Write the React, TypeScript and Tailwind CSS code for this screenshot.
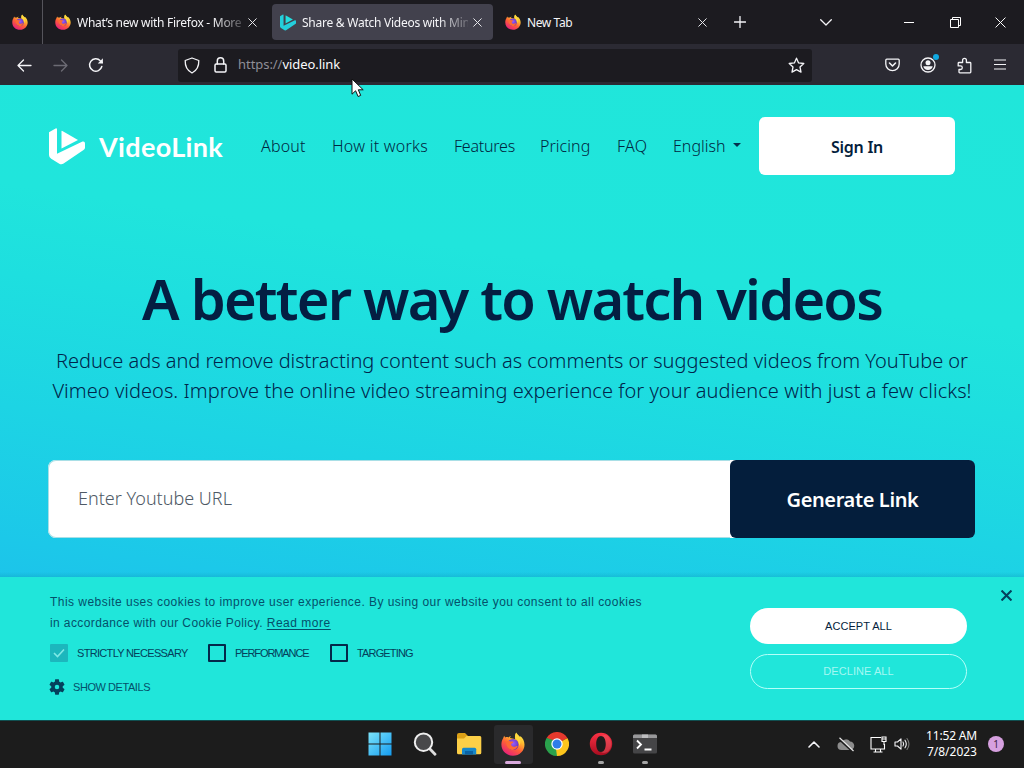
import React from "react";

const UI = "font-['Noto_Sans','Open_Sans',sans-serif]";

function FirefoxIcon({ size = 16, id }: { size?: number; id: string }) {
  return (
    <svg width={size} height={size} viewBox="0 0 24 24" className="shrink-0">
      <defs>
        <linearGradient id={id + "a"} x1="0.8" y1="0.05" x2="0.25" y2="0.95">
          <stop offset="0" stopColor="#fff04a" />
          <stop offset="0.3" stopColor="#ffb52e" />
          <stop offset="0.6" stopColor="#ff5f36" />
          <stop offset="1" stopColor="#e8217a" />
        </linearGradient>
        <radialGradient id={id + "b"} cx="0.5" cy="0.4" r="0.6">
          <stop offset="0" stopColor="#9a5cff" />
          <stop offset="1" stopColor="#5a35b8" />
        </radialGradient>
      </defs>
      <path
        d="M15.2 0.6c1 1.6 2.6 2.8 3.7 4.2.3.4.5-.1.4-.8 2.6 2 4.2 5.400 4.200 8.700C23.500 18.800 18.400 23.700 12 23.700S.4 18.900.4 12.600c0-2.600.6-4.800 1.900-6.600.1-.8.500-1.700 1.100-2.300.1.700.4 1.200.8 1.700 1.100-.4 2.200-.4 3.300 0 .7-.7 1.500-1.200 2.500-1.500-.7.700-1 1.500-.9 2.200 2 .2 3.200.5 4.900 1.200C13.800 5.100 14 2.600 15.200.6z"
        fill={`url(#${id}a)`}
      />
      <circle cx="12" cy="12.500" r="5.600" fill={`url(#${id}b)`} />
      <path
        d="M5.300 9.800c1.200-1 3-.9 4.200-.3 1 .1 2.100 0 2.900.2-.1 1.100-1.400 1.500-2.200 2-.3 1.600.8 3.100 2.700 3.100 1.600 0 2.300-1 3.800-.7-.9 2.700-3.200 4.200-5.900 3.800-3.600-.5-5.900-4-5.500-8.100z"
        fill="#ff6a33"
      />
      <path d="M15 1c1 1.600 2.800 3.200 3.700 5 1.400 3 .8 6-.7 8 .3-3.300-1-5.800-3-7.200-1.300-1.200-1.200-3.600 0-5.800z" fill="#ffd83c" />
    </svg>
  );
}

function Cross({ s = 9, color = "#e8e8ec", w = 1.1 }: { s?: number; color?: string; w?: number }) {
  return (
    <svg width={s} height={s} viewBox="0 0 10 10" fill="none" stroke={color} strokeWidth={w}>
      <path d="M.5 .5l9 9M9.500 .5l-9 9" />
    </svg>
  );
}

function LinkMark({ w, h, top, bottom }: { w: number; h: number; top: string; bottom: string }) {
  return (
    <svg width={w} height={h} viewBox="0 0 36 37" className="shrink-0">
      <path
        d="M0 4.200L6.600 .4Q8 0 8 1.600V25.700L33.500 13.600Q36 13 36 15.500V19.500Q36 21.200 34.500 22.100L14.600 35.600Q12.500 37 10.300 35.800L2.200 30.800Q0 29.500 0 27Z"
        fill={bottom}
      />
      <path d="M12.500 3.400Q12.500 2.600 13.400 3L29 12L12.500 20.600Z" fill={top} />
    </svg>
  );
}

function Glyph({ w, children }: { w: string; children: React.ReactNode }) {
  return <span className={`flex shrink-0 items-center justify-center ${w}`}>{children}</span>;
}

const stroke = { fill: "none", stroke: "#f4f4f7", strokeWidth: 1.3, strokeLinecap: "round", strokeLinejoin: "round" } as const;

function TabBar() {
  return (
    <div className={`flex h-11 items-center bg-[#1c1b20] text-[12px] text-[#f5f5f8] ${UI}`}>
      <div className="flex h-11 w-[43px] shrink-0 items-center border-r border-[#55545b] pl-3">
        <FirefoxIcon size={16} id="f1" />
      </div>
      <div className="flex w-[229px] shrink-0 items-center pl-3">
        <FirefoxIcon size={16} id="f2" />
        <span className="ml-[6px] w-[166px] overflow-hidden whitespace-nowrap pt-[2px] tracking-[-0.27px] [mask-image:linear-gradient(90deg,#000_82%,#0003)]">
          What’s new with Firefox - More
        </span>
        <Glyph w="w-[18px]"><Cross /></Glyph>
      </div>
      <div className="flex h-9 w-[221px] shrink-0 items-center rounded-[4px] bg-[#42414d] pl-2">
        <LinkMark w={16} h={17} top="#24dfe0" bottom="#24cfdc" />
        <span className="ml-[6px] w-[166px] overflow-hidden whitespace-nowrap pt-[2px] tracking-[-0.25px] [mask-image:linear-gradient(90deg,#000_82%,#0003)]">
          Share &amp; Watch Videos with Min
        </span>
        <Glyph w="w-[18px]"><Cross /></Glyph>
      </div>
      <div className="flex w-[218px] shrink-0 items-center pl-3">
        <FirefoxIcon size={16} id="f3" />
        <span className="ml-[6px] w-[166px] pt-[2px] tracking-[-0.4px]">New Tab</span>
        <Glyph w="w-[18px]"><Cross /></Glyph>
      </div>
      <Glyph w="w-[57px]">
        <svg width="12" height="12" viewBox="0 0 12 12" {...stroke}><path d="M6 .5v11M.5 6h11" /></svg>
      </Glyph>
      <Glyph w="w-[116px]">
        <svg width="12" height="7" viewBox="0 0 12 7" {...stroke}><path d="M.7 .7L6 6L11.300 .7" /></svg>
      </Glyph>
      <Glyph w="w-[50px]"><span className="h-px w-[10px] bg-white" /></Glyph>
      <Glyph w="w-[42px]">
        <svg width="11" height="11" viewBox="0 0 11 11" fill="none" stroke="#fff"><path d="M.5 2.500h8v8h-8zM2.500 2.500v-2h8v8h-2" /></svg>
      </Glyph>
      <Glyph w="w-[48px]"><Cross s={11} color="#fff" w={0.9} /></Glyph>
    </div>
  );
}

function Toolbar() {
  return (
    <div className="flex h-[41px] items-center bg-[#2b2a33] pl-[6px] pt-px">
      <Glyph w="w-9">
        <svg width="15" height="13" viewBox="0 0 15 13" {...stroke}><path d="M14 6.500H1M6.500 1L1 6.500L6.500 12" /></svg>
      </Glyph>
      <Glyph w="w-9">
        <svg width="15" height="13" viewBox="0 0 15 13" {...stroke} stroke="#6c6b74"><path d="M1 6.500h13M8.500 1L14 6.500L8.500 12" /></svg>
      </Glyph>
      <Glyph w="w-9">
        <svg width="16" height="16" viewBox="0 0 16 16" {...stroke} strokeWidth="1.500">
          <path d="M13.800 9.500A6.200 6.200 0 1 1 12.300 3.700L14.200 5.500" />
          <path d="M14.900 1.300v5.100H9.800z" fill="#f4f4f7" stroke="none" />
        </svg>
      </Glyph>
      <div className="ml-16 flex h-[33px] w-[634px] items-center rounded-[3px] bg-[#1c1b20]">
        <Glyph w="w-7">
          <svg width="16" height="17" viewBox="0 0 16 17" {...stroke}>
            <path d="M8 1L14.800 3.500C15 9 13 13.500 8 16C3 13.500 1 9 1.200 3.500Z" />
          </svg>
        </Glyph>
        <Glyph w="w-7">
          <svg width="13" height="16" viewBox="0 0 13 16" {...stroke} strokeWidth="1.500">
            <rect x="1" y="7" width="11" height="8" rx="1.200" /><path d="M3.300 7V4a3.200 3.200 0 0 1 6.400 0v3" />
          </svg>
        </Glyph>
        <span className={`ml-1 flex-1 text-[13px] tracking-[-0.05px] text-[#fbfbfe] ${UI}`}>
          <span className="text-[#8f8e97]">https://</span>video.link
        </span>
        <Glyph w="w-8">
          <svg width="17" height="17" viewBox="0 0 17 17" {...stroke}>
            <path d="M8.500 1.200l2.100 4.700 5.200.6-3.800 3.500 1 5.100-4.500-2.500L4 15.100l1-5.100L1.200 6.500l5.200-.6z" />
          </svg>
        </Glyph>
      </div>
      <div className="ml-[62px] flex">
        <Glyph w="w-9">
          <svg width="15" height="14" viewBox="0 0 15 14" {...stroke}>
            <path d="M1.800 1.200h11.400q1 0 1 1V6a6.700 6.700 0 0 1-13.400 0V2.200q0-1 1-1z" /><path d="M4.500 5L7.500 8L10.500 5" strokeWidth="1.600" />
          </svg>
        </Glyph>
        <span className="relative flex w-9 items-center justify-center">
          <svg width="16" height="16" viewBox="0 0 16 16" {...stroke}>
            <circle cx="8" cy="8" r="7" /><circle cx="8" cy="5.800" r="2.500" fill="#f4f4f7" stroke="none" />
            <path d="M3.300 9.200h9.400Q11.800 13 8 13T3.300 9.200z" fill="#f4f4f7" stroke="none" />
          </svg>
          <span className="absolute left-[23px] -top-[3px] h-[6px] w-[6px] rounded-full bg-[#10a8e0]" />
        </span>
        <Glyph w="w-9">
          <svg width="15" height="17" viewBox="0 0 15 17" {...stroke}>
            <path d="M2 5.500h3.600V3.200a1.900 1.900 0 0 1 3.800 0v2.300H13q.8 0 .8.800V15q0 .8-.8.800H2.800Q2 15.800 2 15v-2.500h1.500a1.800 1.800 0 0 0 0-3.600H1.200V6.300q0-.8.800-.8z" />
          </svg>
        </Glyph>
        <Glyph w="w-9">
          <svg width="12" height="11" viewBox="0 0 12 11" fill="none" stroke="#f4f4f7" strokeWidth="1.200" className="-mt-[2px]"><path d="M0 1h12M0 5.500h12M0 10h12" /></svg>
        </Glyph>
      </div>
    </div>
  );
}

function Header() {
  return (
    <header className="flex h-[58px] items-center text-[16px] font-light text-[#00263f]">
      <LinkMark w={36} h={37} top="#fff" bottom="#fff" />
      <span className="ml-[14px] w-[162px] font-['Lato',sans-serif] text-[27px] font-bold leading-none tracking-[0.34px] text-white">
        VideoLink
      </span>
      <nav className="flex w-[498px] whitespace-nowrap">
        <a className="w-[71px] tracking-[0.2px]">About</a>
        <a className="w-[122px] tracking-[0.26px]">How it works</a>
        <a className="w-[86px] tracking-[-0.23px]">Features</a>
        <a className="w-[77px] tracking-[0.05px]">Pricing</a>
        <a className="w-[56px] tracking-[0.3px]">FAQ</a>
        <a className="flex items-center">
          English
          <svg width="8" height="4" viewBox="0 0 8 4" className="-mt-[2px] ml-2"><path d="M0 0h8L4 4z" fill="#04304d" /></svg>
        </a>
      </nav>
      <button className="h-[58px] w-[196px] rounded-[6px] bg-white pt-[2px] text-[16px] font-semibold tracking-[-0.26px] text-[#041e3c]">
        Sign In
      </button>
    </header>
  );
}

function Hero() {
  return (
    <main className={`flex h-[492px] flex-col bg-[linear-gradient(188deg,#20e6da_0%,#20e5dc_38%,#1edfdf_52%,#1dd4e4_73%,#1cc8e9_94%,#1cc4ea_100%)] pl-[49px] pt-8 ${UI}`}>
      <Header />
      <h1 className="mt-[93px] w-[926px] text-center text-[56px] font-semibold leading-[60px] tracking-[-1.8px] text-[#041e42]">
        A better way to watch videos
      </h1>
      <p className="mt-[18px] w-[926px] whitespace-nowrap text-center text-[20px] font-light leading-[30px] text-[#00244a]">
        <span className="tracking-[-0.026px]">Reduce ads and remove distracting content such as comments or suggested videos from YouTube or</span>
        <br />
        <span className="tracking-[0.04px]">Vimeo videos. Improve the online video streaming experience for your audience with just a few clicks!</span>
      </p>
      <form className="-ml-px mt-[54px] flex h-[78px] w-[927px] rounded-[8px] bg-white">
        <span className="flex flex-1 items-center rounded-l-[8px] border border-r-0 border-[#a9dfe6] pb-[2px] pl-[29px] text-[18px] font-light text-[#4f5a66]">
          Enter Youtube URL
        </span>
        <span className="flex w-[245px] items-center justify-center rounded-[6px] bg-[#041e3c] pt-[2px] text-[20px] font-semibold tracking-[-0.37px] text-white">
          Generate Link
        </span>
      </form>
      <div className="-ml-[49px] mt-auto h-[5px] bg-gradient-to-b from-transparent to-[#0893ad44]" />
    </main>
  );
}

function Check({ label, on, w, ls }: { label: string; on?: boolean; w: string; ls: string }) {
  return (
    <span className={`flex items-center ${w}`}>
      {on ? (
        <svg width="18" height="18" viewBox="0 0 18 18"><rect width="18" height="18" rx="1" fill="#1cb7bd" /><path d="M4 9l3.500 3.500L14 5.500" fill="none" stroke="#7fe9e6" strokeWidth="1.600" /></svg>
      ) : (
        <span className="h-[18px] w-[18px] rounded-[1px] border-2 border-[#04284a]" />
      )}
      <span className={`ml-[9px] ${ls}`}>{label}</span>
    </span>
  );
}

function CookieBar() {
  return (
    <section className="flex h-[143px] bg-[#20e6da] pl-[50px] font-['Liberation_Sans',Arial,sans-serif] text-[11px] text-[#04506a]">
      <div className="w-[700px] pt-[15px]">
        <p className="whitespace-nowrap text-[12px] leading-[21px]">
          <span className="tracking-[0.46px]">This website uses cookies to improve user experience. By using our website you consent to all cookies</span>
          <br />
          <span className="tracking-[0.39px]">in accordance with our Cookie Policy. <span className="tracking-[0.52px] underline underline-offset-2">Read more</span></span>
        </p>
        <div className="mt-[10px] flex h-[18px] whitespace-nowrap text-[#04405a]">
          <Check label="STRICTLY NECESSARY" on w="w-[158px]" ls="tracking-[-0.68px]" />
          <Check label="PERFORMANCE" w="w-[122px]" ls="tracking-[-1.1px]" />
          <Check label="TARGETING" w="w-[100px]" ls="tracking-[-0.85px]" />
        </div>
        <div className="mt-[17px] flex items-center">
          <svg width="16" height="16" viewBox="2 2 20 20" fill="#04405c" className="-ml-px">
            <path d="M19.140 12.940c.04-.3.060-.61.060-.94s-.02-.64-.07-.94l2.030-1.580c.18-.14.230-.41.120-.61l-1.920-3.320c-.12-.22-.37-.29-.59-.22l-2.390.96c-.5-.38-1.030-.7-1.620-.94l-.36-2.540c-.04-.24-.24-.41-.48-.41h-3.840c-.24 0-.43.170-.47.410l-.36 2.540c-.59.240-1.130.570-1.620.940l-2.390-.96c-.22-.08-.47 0-.59.220L2.740 8.870c-.12.210-.08.470.120.610l2.030 1.580c-.05.300-.09.630-.09.940s.02.640.070.940l-2.030 1.580c-.18.140-.23.410-.12.610l1.920 3.320c.12.220.37.290.59.220l2.390-.96c.5.380 1.030.700 1.620.940l.36 2.540c.05.240.24.410.48.410h3.840c.24 0 .44-.17.470-.41l.36-2.540c.59-.24 1.130-.56 1.620-.94l2.390.96c.22.080.47 0 .59-.22l1.920-3.320c.12-.22.070-.47-.12-.61l-2.010-1.580zM12 14.800a2.800 2.800 0 1 1 0-5.600 2.800 2.800 0 0 1 0 5.600z" />
          </svg>
          <span className="ml-2 tracking-[-0.44px]">SHOW DETAILS</span>
        </div>
      </div>
      <div className="flex w-[217px] flex-col pt-[31px]">
        <span className="flex h-9 items-center justify-center rounded-full bg-white tracking-[0.05px] text-[#041e3c]">ACCEPT ALL</span>
        <span className="mt-[10px] flex h-[35px] items-center justify-center rounded-full border border-[#b5fff9] tracking-[0.05px] text-[#a5f7f2]">DECLINE ALL</span>
      </div>
      <div className="ml-[34px] mt-[13px]"><Cross s={11} color="#04405c" w={1.900} /></div>
    </section>
  );
}

function Taskbar() {
  return (
    <footer className={`flex h-12 items-center border-t border-[#104f50] bg-[#1c1c1c] pb-px pl-[358px] text-white ${UI}`}>
      <Glyph w="w-[44px]">
        <svg width="24" height="24" viewBox="0 0 24 24">
          <defs><linearGradient id="win" x1="0" y1="0" x2="1" y2="1"><stop offset="0" stopColor="#7de4fb" /><stop offset="1" stopColor="#149cf0" /></linearGradient></defs>
          <path d="M.5 .5h11v11H.5zM12.500 .5h11v11h-11zM.5 12.500h11v11H.5zM12.500 12.500h11v11h-11z" fill="url(#win)" />
        </svg>
      </Glyph>
      <Glyph w="w-[45px]">
        <svg width="24" height="24" viewBox="0 0 24 24"><path d="M16.500 16.500l5.500 5.700" stroke="#ddd" strokeWidth="2.800" strokeLinecap="round" /><circle cx="10.500" cy="10.200" r="8.700" fill="#48484a" stroke="#eee" strokeWidth="2" /></svg>
      </Glyph>
      <Glyph w="w-[44px]">
        <svg width="26" height="24" viewBox="0 0 26 24">
          <path d="M1 3q0-2 2-2h6l3 3v5H1z" fill="#dca016" />
          <path d="M1 6.500h7L10.500 4H24q1.300 0 1.300 1.500v15.300q0 1.500-1.500 1.500H2.500Q1 22.300 1 20.800z" fill="#fccf47" />
          <path d="M6 22.500v-5.300q0-1.500 1.500-1.500h11.200q1.500 0 1.500 1.500v5.300z" fill="#1687c9" /><path d="M9 19h8v3.500H9z" fill="#0b62a3" />
        </svg>
      </Glyph>
      <Glyph w="w-[44px]">
        <span className="relative flex h-[39px] w-[39px] items-center justify-center rounded-[3px] bg-[#2a2a2c]">
          <FirefoxIcon size={24} id="f4" />
          <span className="absolute bottom-0 h-[3px] w-4 rounded-full bg-[#d8a9dc]" />
        </span>
      </Glyph>
      <Glyph w="w-[44px]">
        <svg width="24" height="24" viewBox="0 0 24 24">
          <path d="M12 12L1.600 6A12 12 0 0 1 22.400 6z" fill="#e5392d" />
          <path d="M12 12L22.400 6A12 12 0 0 1 12 24z" fill="#fdc51c" />
          <path d="M12 12V24A12 12 0 0 1 1.600 6z" fill="#2aa14c" />
          <path d="M12 6.500H22.700L22.400 6L12 5z" fill="#e5392d" />
          <path d="M7 14.700L1.600 6L8 8z" fill="#2aa14c" /><path d="M16.700 14.800L12 24L11 17z" fill="#fdc51c" />
          <circle cx="12" cy="12" r="5.700" fill="#fff" /><circle cx="12" cy="12" r="4.500" fill="#2f7de9" />
        </svg>
      </Glyph>
      <Glyph w="w-[44px]">
        <span className="relative flex h-[39px] items-center justify-center">
          <svg width="24" height="24" viewBox="0 0 24 24">
            <defs><linearGradient id="op" x1="0" y1="0" x2="0" y2="1"><stop offset="0" stopColor="#fb3144" /><stop offset="1" stopColor="#a80d20" /></linearGradient></defs>
            <path fillRule="evenodd" d="M12 .8a11.200 11.200 0 1 0 0 22.400a11.200 11.200 0 1 0 0-22.400zM12 4c3 0 4.800 3.500 4.800 8s-1.800 8-4.800 8-4.800-3.500-4.800-8S9 4 12 4z" fill="url(#op)" />
            <path d="M12 4c2-1.500 5.500-1.200 7.300.4A11 11 0 0 1 19.300 19.600C17 21.200 14 21.500 12 20c3 0 4.800-3.500 4.800-8S15 4 12 4z" fill="#f77478" opacity=".35" />
          </svg>
          <span className="absolute bottom-0 h-[3px] w-[6px] rounded-full bg-[#a5a5a5]" />
        </span>
      </Glyph>
      <Glyph w="w-[44px]">
        <span className="relative flex h-[39px] items-center justify-center">
          <svg width="24" height="20" viewBox="0 0 24 20">
            <rect width="24" height="19" y=".5" rx="1.500" fill="#454547" /><path d="M0 4V2Q0 .5 1.500 .5H22.500Q24 .5 24 2V4z" fill="#98989a" /><path d="M9 .5h6V4H9z" fill="#bdbdbf" />
            <path d="M4 6.500l4 4-4 4M11.500 15.500h7" fill="none" stroke="#fff" strokeWidth="1.800" />
          </svg>
          <span className="absolute bottom-0 h-[3px] w-[6px] rounded-full bg-[#a5a5a5]" />
        </span>
      </Glyph>
      <div className="ml-auto flex items-center pr-5">
        <svg width="12" height="7" viewBox="0 0 12 7" {...stroke} strokeWidth="1.600"><path d="M1 6L6 1l5 5" /></svg>
        <svg width="18" height="15" viewBox="0 0 18 15" className="ml-[17px]">
          <path d="M4.500 13a4 4 0 0 1 0-8A5 5 0 0 1 13 4.500a4.200 4.200 0 0 1 0 8.500z" fill="#8c8c8c" />
          <path d="M1.500 1.500L15 14" stroke="#1c1c1c" strokeWidth="2" /><path d="M2.500 .8L16.500 14" stroke="#e8e8e8" strokeWidth="1.200" />
        </svg>
        <svg width="17" height="17" viewBox="0 0 17 17" className="ml-[15px]" fill="none" stroke="#fff" strokeWidth="1.100">
          <path d="M11 1.500H1v11.500h13.500V8M5.500 13v3M10.500 13v3M3.500 16h9M12 1h4v4.500h-4zM14 5.500V9M12 3h4" />
        </svg>
        <svg width="16" height="14" viewBox="0 0 16 14" className="ml-[7px]" {...stroke} strokeWidth="1.100">
          <path d="M1 5v4h2.500L7 12.200V1.800L3.500 5z" /><path d="M9 5q1.300 2 0 4M11 3.200q2.600 3.800 0 7.600" /><path d="M13 1.500q4 5.500 0 11" stroke="#777" />
        </svg>
        <div className="ml-[8px] w-[59px] text-right text-[12px] leading-4">
          <div className="tracking-[-0.17px]">11:52 AM</div>
          <div>7/8/2023</div>
        </div>
        <span className="ml-[11px] flex h-4 w-4 items-center justify-center rounded-full bg-[#d6a0df] text-[10px] text-[#3c2342]">1</span>
      </div>
    </footer>
  );
}

export default function App() {
  return (
    <div className="relative h-[768px] w-[1024px] overflow-hidden">
      <TabBar />
      <Toolbar />
      <Hero />
      <CookieBar />
      <Taskbar />
      <svg width="13" height="20" viewBox="0 0 13 20" className="absolute left-[351px] top-[78px]">
        <path d="M1 1v15.200l3.600-3.400 2.500 5.700 2.600-1.100-2.400-5.600h4.900z" fill="#fff" stroke="#111" />
      </svg>
    </div>
  );
}
